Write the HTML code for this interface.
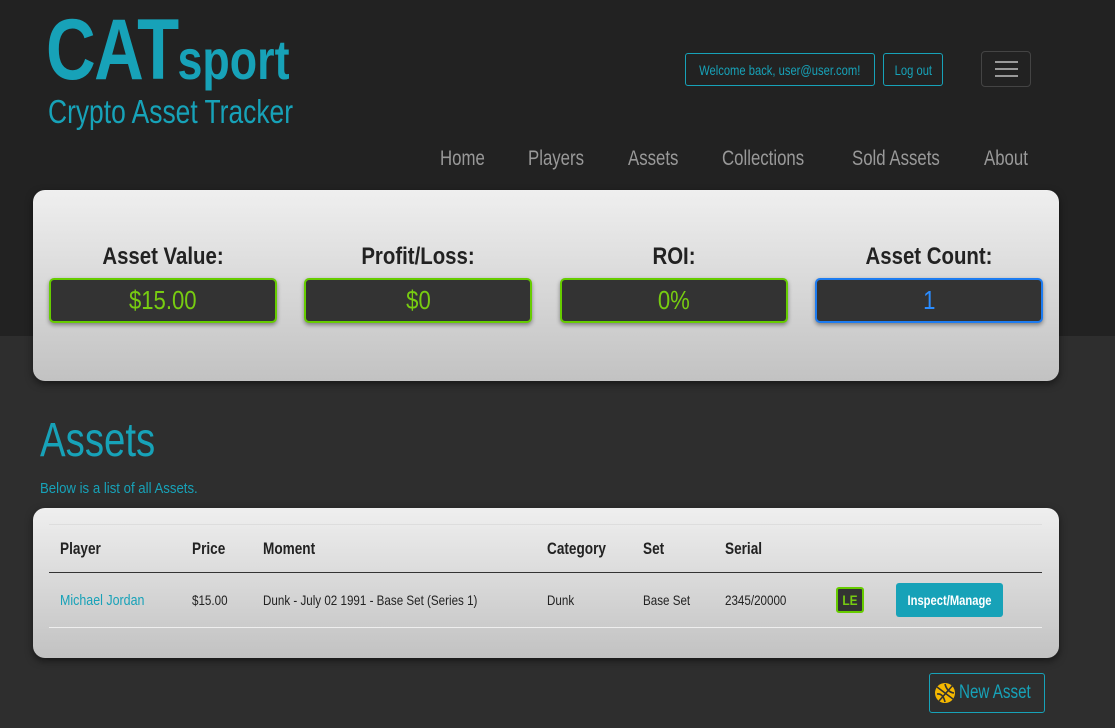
<!DOCTYPE html>
<html><head><meta charset="utf-8"><style>
*{box-sizing:border-box;margin:0;padding:0}
body{width:1115px;height:728px;overflow:hidden;background:#2e2e2e;font-family:"Liberation Sans",sans-serif;position:relative}
.top{position:absolute;left:0;top:0;width:1115px;height:336px;background:#222}
.abs{position:absolute;white-space:nowrap}
.n{transform:scaleX(.8);transform-origin:left}
.teal{color:#17a2b8}
.btn{position:absolute;border:1px solid #17a2b8;border-radius:3px;color:#17a2b8;font-size:14px;display:flex;align-items:center;justify-content:center;white-space:nowrap}
.btn span{display:inline-block;transform:scaleX(.8)}
.nav{position:absolute;top:147px;color:#999;font-size:21px;transform:scaleX(.8);transform-origin:left;white-space:nowrap}
.card{position:absolute;left:33px;background:linear-gradient(#efefef,#c2c2c2);border-radius:12px;box-shadow:0 3px 8px rgba(0,0,0,.5)}
.stat{position:absolute;top:243px;width:228px;text-align:center}
.stat .l{font-size:24px;font-weight:bold;color:#222;height:35px;transform:scaleX(.85);white-space:nowrap}
.stat .b{height:45px;background:#333;border:2px solid #6c0;border-radius:5px;color:#7c1;font-size:26px;display:flex;align-items:center;justify-content:center;box-shadow:0 2px 4px rgba(0,0,0,.4)}
.stat .b span{display:inline-block;transform:scaleX(.85)}
.th{position:absolute;top:539px;font-size:17px;font-weight:bold;color:#222;transform:scaleX(.8);transform-origin:left;white-space:nowrap}
.td{position:absolute;top:592px;font-size:14px;color:#222;transform:scaleX(.83);transform-origin:left;white-space:nowrap}
</style></head><body>
<div class="top"></div>
<div class="abs teal" style="left:46px;top:2px;font-size:86px;font-weight:bold;letter-spacing:-2px;line-height:96px;transform:scaleX(.8);transform-origin:left">CAT<span style="font-size:56px;letter-spacing:0">sport</span></div>
<div class="abs teal n" style="left:48px;top:92px;font-size:33px;line-height:40px">Crypto Asset Tracker</div>
<div class="btn" style="left:685px;top:53px;width:190px;height:33px"><span>Welcome back, user@user.com!</span></div>
<div class="btn" style="left:883px;top:53px;width:60px;height:33px"><span>Log out</span></div>
<div class="abs" style="left:981px;top:51px;width:50px;height:36px;border:1px solid #444;border-radius:4px">
<div class="abs" style="left:13px;top:9px;width:23px;height:2px;background:#999"></div>
<div class="abs" style="left:13px;top:16px;width:23px;height:2px;background:#999"></div>
<div class="abs" style="left:13px;top:23px;width:23px;height:2px;background:#999"></div></div>
<div class="nav" style="left:440px">Home</div>
<div class="nav" style="left:528px">Players</div>
<div class="nav" style="left:628px">Assets</div>
<div class="nav" style="left:722px">Collections</div>
<div class="nav" style="left:852px">Sold Assets</div>
<div class="nav" style="left:984px">About</div>
<div class="card" style="top:190px;width:1026px;height:191px"></div>
<div class="stat" style="left:49px"><div class="l">Asset Value:</div><div class="b"><span>$15.00</span></div></div>
<div class="stat" style="left:304px"><div class="l">Profit/Loss:</div><div class="b"><span>$0</span></div></div>
<div class="stat" style="left:560px"><div class="l">ROI:</div><div class="b"><span>0%</span></div></div>
<div class="stat" style="left:815px"><div class="l">Asset Count:</div><div class="b" style="border-color:#1e7cf0;color:#2a8cff"><span>1</span></div></div>
<div class="abs teal" style="left:40px;top:412px;font-size:48px;line-height:58px;transform:scaleX(.8);transform-origin:left">Assets</div>
<div class="abs teal" style="left:40px;top:480px;font-size:15px;transform:scaleX(.88);transform-origin:left">Below is a list of all Assets.</div>
<div class="card" style="top:508px;width:1026px;height:150px"></div>
<div class="abs" style="left:49px;top:524px;width:993px;height:1px;background:#ddd"></div>
<div class="abs" style="left:49px;top:572px;width:993px;height:1px;background:#333"></div>
<div class="abs" style="left:49px;top:627px;width:993px;height:1px;background:#eee"></div>
<div class="th" style="left:60px">Player</div><div class="th" style="left:192px">Price</div><div class="th" style="left:263px">Moment</div><div class="th" style="left:547px">Category</div><div class="th" style="left:643px">Set</div><div class="th" style="left:725px">Serial</div>
<div class="td" style="left:60px;font-size:15px;color:#17a2b8">Michael Jordan</div><div class="td" style="left:192px">$15.00</div><div class="td" style="left:263px">Dunk - July 02 1991 - Base Set (Series 1)</div><div class="td" style="left:547px">Dunk</div><div class="td" style="left:643px">Base Set</div><div class="td" style="left:725px">2345/20000</div>
<div class="abs" style="left:836px;top:587px;width:28px;height:26px;background:#333;border:2px solid #6c0;border-radius:3px;color:#7c1;font-size:14px;font-weight:bold;display:flex;align-items:center;justify-content:center"><span style="transform:scaleX(.85);display:inline-block">LE</span></div>
<div class="abs" style="left:896px;top:583px;width:107px;height:34px;background:#17a2b8;border-radius:3px;color:#fff;font-size:14px;font-weight:bold;display:flex;align-items:center;justify-content:center"><span style="transform:scaleX(.8);display:inline-block">Inspect/Manage</span></div>
<div class="btn" style="left:929px;top:673px;width:116px;height:40px;font-size:19px">
<svg width="22" height="22" viewBox="0 0 22 22" style="margin-right:2px"><circle cx="11" cy="11" r="10" fill="#f5b800"/><g stroke="#333" stroke-width="1.6" fill="none"><path d="M3 5l16 12M5 19L19 3M3 12q6-1 8 8M11 2q2 8 9 9"/></g></svg><span style="margin-left:-8px">New Asset</span></div>
</body></html>
